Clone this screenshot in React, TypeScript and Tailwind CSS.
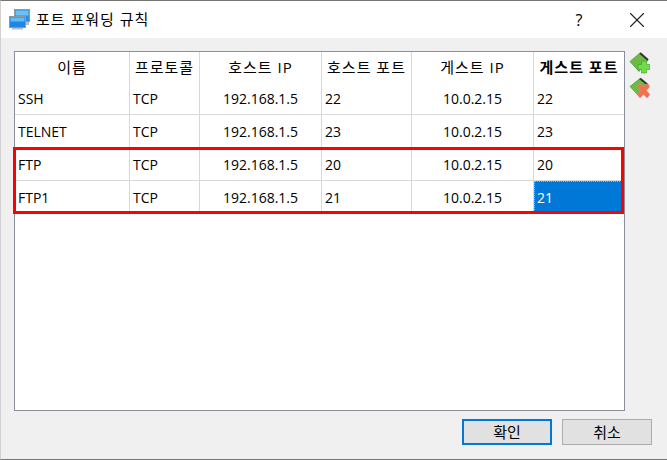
import React from "react";
import { X } from "lucide-react";

const font = { fontFamily: '"Open Sans", "Noto Sans CJK KR", sans-serif' };

const columns = [
  { label: "이름", width: "w-[115px]" },
  { label: "프로토콜", width: "w-[70px]" },
  { label: "호스트 IP", width: "w-[122px]" },
  { label: "호스트 포트", width: "w-[90px]" },
  { label: "게스트 IP", width: "w-[122px]" },
  { label: "게스트 포트", width: "w-[90px]" },
];

const rows = [
  ["SSH", "TCP", "192.168.1.5", "22", "10.0.2.15", "22"],
  ["TELNET", "TCP", "192.168.1.5", "23", "10.0.2.15", "23"],
  ["FTP", "TCP", "192.168.1.5", "20", "10.0.2.15", "20"],
  ["FTP1", "TCP", "192.168.1.5", "21", "10.0.2.15", "21"],
];

function WindowIcon() {
  return (
    <svg width="22" height="22" viewBox="0 0 22 22">
      <rect x="5.5" y="0.5" width="15" height="12" fill="#2a8fe0" stroke="#8a9aa8" />
      <rect x="6.5" y="1.5" width="13" height="5" fill="#6cc0f4" />
      <path d="M17 13h3v3h-3z" fill="#b4bcc4" />
      <rect x="0.5" y="7.5" width="16" height="11" fill="#1f86e4" stroke="#8a9aa8" />
      <rect x="1.5" y="8.5" width="14" height="4" fill="#62bbf6" />
      <path d="M3 19h11v1.500H3z" fill="#b4bcc4" />
    </svg>
  );
}

function RuleIcon({ kind }: { kind: "add" | "remove" }) {
  if (kind === "add") {
    return (
      <svg width="22" height="22" viewBox="0 0 22 22">
        <path d="M2 9.500 L12 1 L20 8 L11 19.500 Z" fill="#6cbb45" stroke="#4f9e34" strokeWidth="0.8" />
        <path d="M12 1 L20 8" stroke="#333" strokeWidth="2" />
        <path
          d="M13.500 9h5v3.500H22v5h-3.500V21h-5v-3.500H10v-5h3.500z"
          fill="#6fdc4a"
          stroke="#3f9a2c"
          strokeWidth="0.6"
        />
      </svg>
    );
  }
  return (
    <svg width="22" height="22" viewBox="0 0 22 22">
      <path d="M2 8.500 L12 0.500 L20 7 L11 18 Z" fill="#6cbb45" stroke="#4f9e34" strokeWidth="0.8" />
      <path d="M12 0.500 L20 7" stroke="#333" strokeWidth="2" />
      <path
        d="M12 5.500l3.500 3.500 3.500-3.500 3 3-3.500 4 3.500 4-3 3.500-3.500-3.500-3.500 3.500-3-3.500 3.500-4-3.500-4z"
        fill="#f4704f"
        stroke="#e8907a"
        strokeWidth="0.5"
      />
    </svg>
  );
}

export default function App() {
  return (
    <div
      className="w-[667px] h-[460px] flex flex-col bg-[#f0f0f0] border-t border-b border-l border-t-[#757575] border-b-[#757575] border-l-[#d0d0d0] text-[14px] text-black overflow-hidden"
      style={font}
    >
      <div className="h-[37px] shrink-0 bg-white flex items-center pl-[8px]">
        <WindowIcon />
        <span className="ml-[5px] text-[15px] tracking-[1px]">포트 포워딩 규칙</span>
        <span className="ml-auto text-[16px] w-[20px] text-center">?</span>
        <button className="ml-[35px] mr-[17px] w-[26px] flex justify-center">
          <X className="w-[26px] h-[26px] text-[#222]" strokeWidth={1} />
        </button>
      </div>

      <div className="flex pl-[13px] pt-[13px]">
        <div className="relative w-[611px] h-[360px] shrink-0 bg-white border border-[#8a8f99]">
          <div className="flex h-[30px]">
            {columns.map((col, i) => (
              <div
                key={col.label}
                className={`${col.width} flex items-center justify-center text-[15px] tracking-[1px] ${i < 5 ? "border-r border-[#d8d8d8]" : ""} ${i === 5 ? "font-bold" : ""}`}
              >
                {col.label}
              </div>
            ))}
          </div>
          {rows.map((row, r) => (
            <div key={row[0]} className="flex h-[33px]">
              {row.map((cell, i) => {
                const selected = r === 3 && i === 5;
                const centered = i === 2 || i === 4;
                return (
                  <div
                    key={i}
                    className={`${columns[i].width} flex items-center border-b border-[#d8d8d8] ${i < 5 ? "border-r" : ""} ${centered ? "justify-center" : "pl-[3px]"} ${selected ? "bg-[#0078d7] text-white outline-1 outline-dotted -outline-offset-1 outline-[#e8a860]" : ""}`}
                  >
                    {cell}
                  </div>
                );
              })}
            </div>
          ))}
          <div className="absolute left-[-2px] top-[95px] w-[611px] h-[67px] border-[3px] border-[#ff0000]" />
        </div>
        <div className="flex flex-col gap-[4px] ml-[3px] mt-[1px]">
          <RuleIcon kind="add" />
          <RuleIcon kind="remove" />
        </div>
      </div>

      <div className="flex justify-end gap-[10px] pr-[15px] pt-[8px]">
        <button className="w-[90px] h-[26px] bg-[#e1e1e1] border-2 border-[#0078d7] flex items-center justify-center text-[15px]">
          확인
        </button>
        <button className="w-[90px] h-[26px] bg-[#e1e1e1] border border-[#adadad] flex items-center justify-center text-[15px]">
          취소
        </button>
      </div>
    </div>
  );
}
